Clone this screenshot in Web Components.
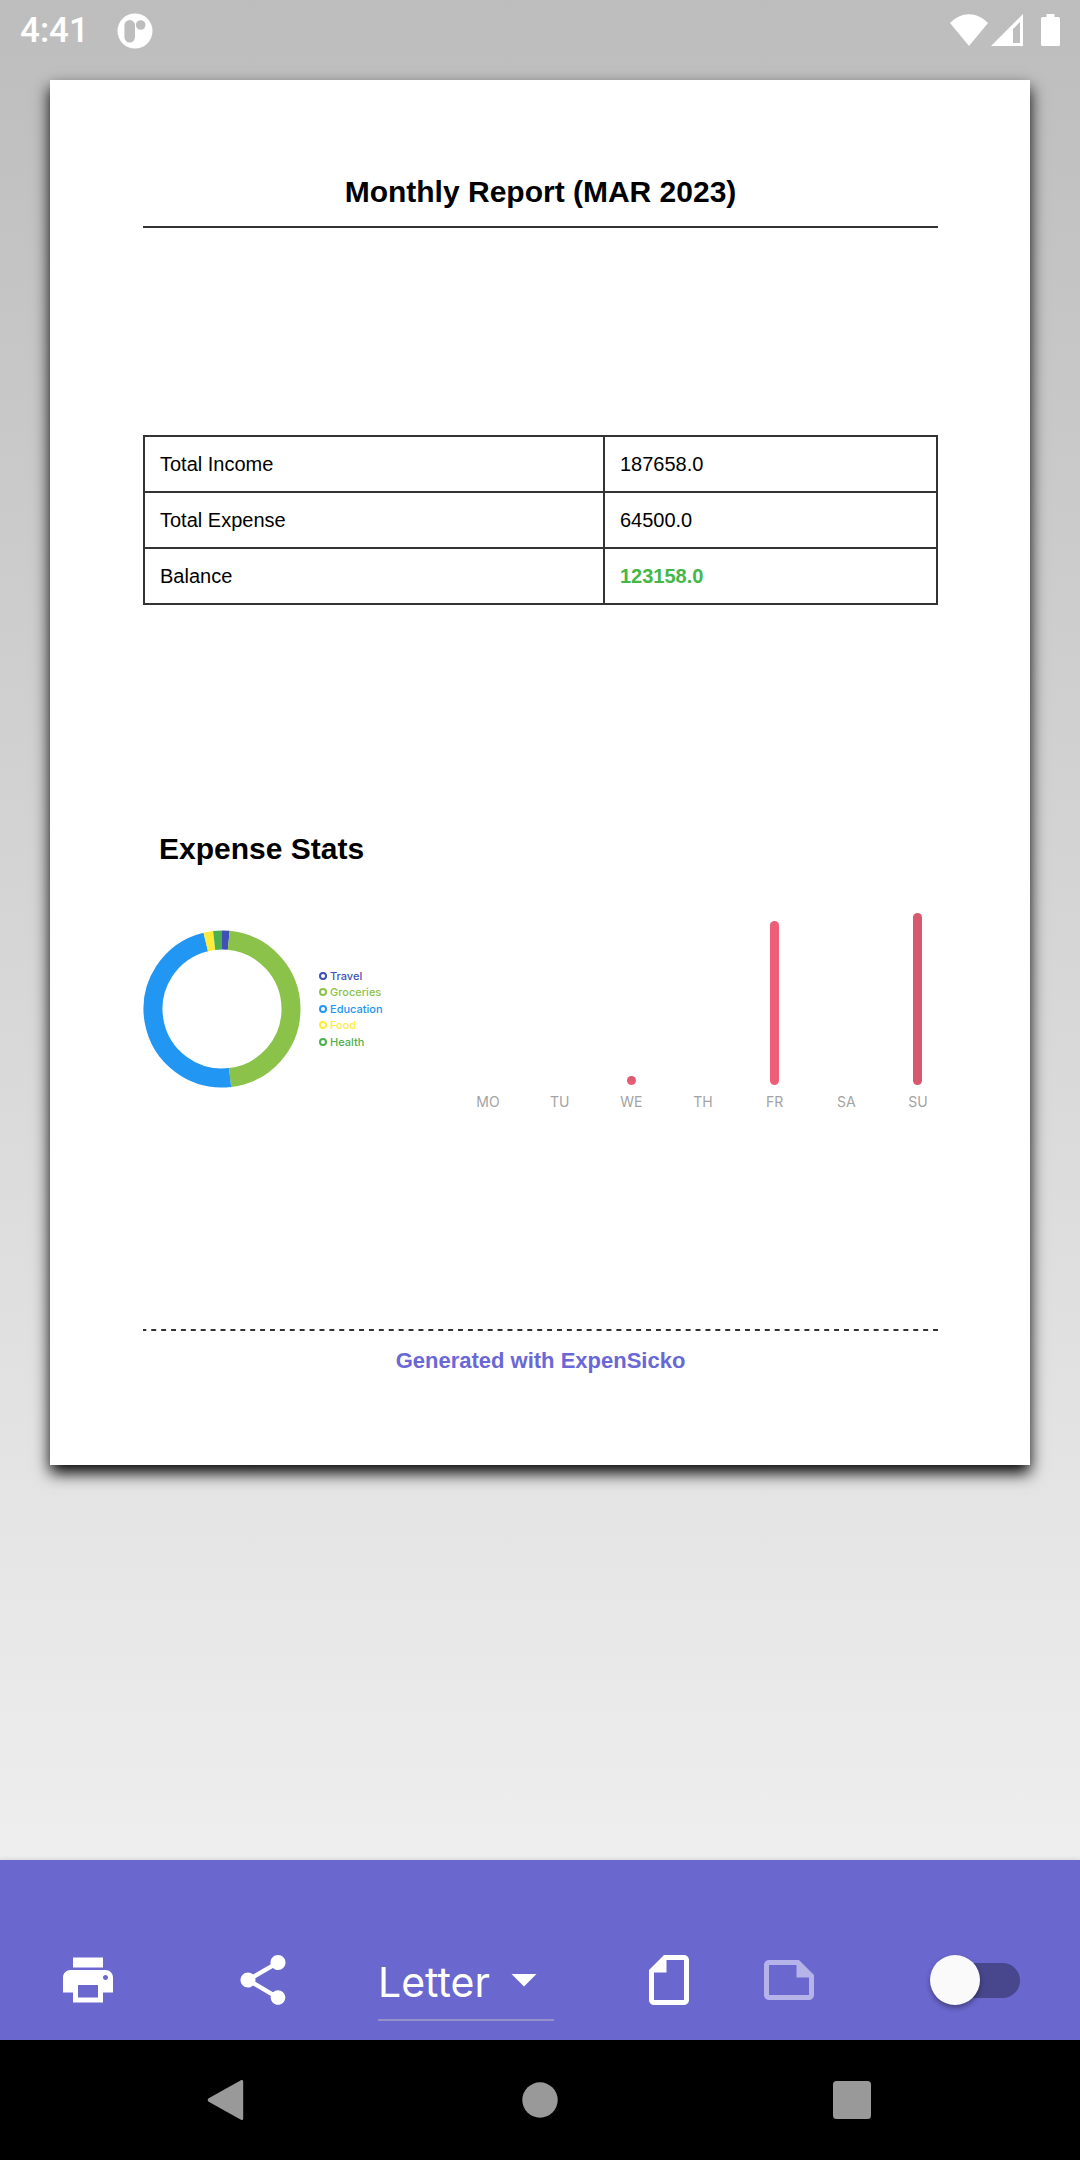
<!DOCTYPE html>
<html lang="en">
<head>
<meta charset="utf-8">
<meta name="viewport" content="width=device-width, initial-scale=1">
<title>Monthly Report</title>
<style>
  html, body { margin: 0; padding: 0; }
  body { min-height: 100vh; display: flex; flex-direction: column; }
  print-preview-app { flex: 1; }
</style>
</head>
<body>
<print-preview-app></print-preview-app>

<script>
const define = (name, html, setup) => {
  const template = document.createElement('template');
  template.innerHTML = '<style>*,*::before,*::after{box-sizing:border-box}</style>' + html;
  customElements.define(name, class extends HTMLElement {
    constructor() {
      super();
      this.attachShadow({ mode: 'open' }).appendChild(template.content.cloneNode(true));
    }
    connectedCallback() {
      if (setup) setup(this, this.shadowRoot);
    }
  });
};

define('status-bar', `
  <style>
    :host { display: flex; align-items: center; justify-content: space-between; height: 60px; padding: 2px 20px 0; color: #fff; font: 500 35px/58px Roboto, sans-serif; }
    div { display: flex; align-items: center; }
    .left { gap: 28px; }
    svg { display: block; fill: #fff; }
    .right { gap: 3px; }
    .battery { margin-left: 15px; }
  </style>
  <div class="left">
    <span>4:41</span>
    <svg width="36" height="36" viewBox="0 0 36 36" role="img" aria-label="App notification"><path fill-rule="evenodd" d="M18 .5a17.5 17.5 0 1 0 0 35a17.5 17.5 0 1 0 0-35zM12.700 7a5.300 5.300 0 0 1 5.300 5.300v12a5.300 5.300 0 0 1-10.600 0v-12A5.300 5.300 0 0 1 12.700 7zM23.700 7.200a4.800 4.800 0 1 1 0 9.600a4.800 4.800 0 1 1 0-9.600z"/></svg>
  </div>
  <div class="right">
    <svg width="38" height="34" viewBox="0 1 38 34" role="img" aria-label="Wi-Fi"><path d="M0 10C11-1.700 27-1.700 38 10L19 33z"/></svg>
    <svg width="32" height="34" viewBox="0 1 32 34" role="img" aria-label="Mobile signal"><path fill-rule="evenodd" d="M32 1v32H0zM29 9l-7 7v14h7z"/></svg>
    <svg class="battery" width="19" height="34" viewBox="0 1 19 34" role="img" aria-label="Battery full"><path d="M5.500 1h8v3H17.500a1.500 1.500 0 0 1 1.500 1.500V31.500a1.500 1.500 0 0 1-1.500 1.500h-16A1.500 1.500 0 0 1 0 31.500v-26A1.500 1.500 0 0 1 1.500 4h4z"/></svg>
  </div>
`);

define('report-sheet', `
  <style>
    :host { display: block; background: #fff; padding: 94px 92px 90px 93px; box-shadow: 0 8px 15px #000; color: #000; font-family: "Liberation Sans", Arial, sans-serif; }
  </style>
  <slot></slot>
`);

define('report-title', `
  <style>
    :host { display: block; border-bottom: 2px solid #333; }
    h1 { margin: 0; padding-bottom: 16px; text-align: center; font: bold 30px/36px "Liberation Sans", Arial, sans-serif; }
  </style>
  <h1><slot></slot></h1>
`);

define('report-totals', `
  <style>
    :host { display: block; margin-top: 207px; }
    table { width: 100%; border-collapse: collapse; table-layout: fixed; font-size: 20px; line-height: 24px; }
    th, td { height: 56px; padding: 0 15px; border: 2px solid #333; text-align: left; font-weight: normal; }
    th { width: 58%; }
    .balance { color: #44b749; font-weight: bold; }
  </style>
  <table>
    <tbody>
      <tr><th scope="row">Total Income</th><td>187658.0</td></tr>
      <tr><th scope="row">Total Expense</th><td>64500.0</td></tr>
      <tr><th scope="row">Balance</th><td class="balance">123158.0</td></tr>
    </tbody>
  </table>
`);

define('category-donut', `
  <style>
    :host { display: flex; align-items: center; gap: 18px; padding-bottom: 7px; }
    svg { display: block; }
    ul { list-style: none; margin: 0; padding: 0; height: 82px; display: flex; flex-direction: column; justify-content: space-between; font: 500 11px/16px Inter, sans-serif; }
    li { display: flex; align-items: center; gap: 3px; }
    li::before { content: ""; width: 8px; height: 8px; border: 2px solid; border-radius: 50%; }
  </style>
  <svg width="158" height="158" viewBox="-79 -79 158 158" role="img" aria-label="Expenses by category"></svg>
  <ul></ul>
`, (host, root) => {
  const slices = [
    ['Travel', '#3f51b5', 5.6], ['Groceries', '#8bc34a', 173.3],
    ['Education', '#2196f3', 346.4], ['Food', '#ffeb3b', 353.5], ['Health', '#4caf50', 360]
  ];
  const point = (deg, r) => {
    const a = deg * Math.PI / 180;
    return (Math.sin(a) * r).toFixed(3) + ' ' + (-Math.cos(a) * r).toFixed(3);
  };
  let from = 0;
  root.querySelector('svg').innerHTML = slices.map(([, color, to]) => {
    const d = `M${point(from, 69)}A69 69 0 0 1 ${point(to, 69)}`;
    from = to;
    return `<path d="${d}" fill="none" stroke="${color}" stroke-width="19"/>`;
  }).join('');
  root.querySelector('ul').innerHTML = slices.map(([name, color]) => `<li style="color:${color}">${name}</li>`).join('');
});

define('week-bars', `
  <style>
    :host { display: flex; justify-content: space-between; width: 470px; color: #a3a3a3; font: 400 14px/18px Inter, sans-serif; }
    div { width: 40px; display: flex; flex-direction: column; align-items: center; justify-content: flex-end; gap: 8px; height: 198px; }
    i { width: 9px; border-radius: 5px; background: #ee5e77; }
    .today { background: #d8586e; }
    .dot { background: linear-gradient(#d8586e, #ee5e77); }
  </style>
  <div>MO</div>
  <div>TU</div>
  <div><i class="dot" style="height:9px"></i>WE</div>
  <div>TH</div>
  <div><i style="height:164px"></i>FR</div>
  <div>SA</div>
  <div><i class="today" style="height:172px"></i>SU</div>
`);

define('expense-stats', `
  <style>
    :host { display: block; margin-top: 226px; }
    h2 { margin: 0 0 46px; padding: 0 16px; font: bold 30px/36px "Liberation Sans", Arial, sans-serif; }
    div { display: flex; justify-content: space-between; align-items: center; }
  </style>
  <h2>Expense Stats</h2>
  <div><category-donut></category-donut><week-bars></week-bars></div>
`);

define('report-footer', `
  <style>
    :host { display: block; margin-top: 218px; }
    svg { display: block; width: 100%; height: 2px; }
    p { margin: 16px 0 0; text-align: center; color: #6a67d6; font: bold 22px/28px "Liberation Sans", Arial, sans-serif; }
  </style>
  <svg viewBox="0 0 482 2" preserveAspectRatio="none" aria-hidden="true"><path d="M0 1H482" stroke="#333" stroke-width="2" stroke-dasharray="3 3" stroke-dashoffset="1"/></svg>
  <p><slot></slot></p>
`);

define('icon-button', `
  <style>
    :host { display: block; }
    button { display: grid; place-items: center; width: 120px; height: 120px; margin: 0; padding: 0; border: 0; background: none; color: inherit; }
    svg { width: 60px; height: 60px; fill: currentColor; }
  </style>
  <button type="button"><svg viewBox="0 0 24 24" aria-hidden="true"><path/></svg></button>
`, (host, root) => {
  const note = 'M16 4H4c-1.100 0-2 .9-2 2v12c0 1.100.9 2 2 2h16c1.100 0 2-.9 2-2v-8l-6-6zM4 18V6h11v5h5v7H4z';
  const paths = {
    print: 'M19 8H5c-1.660 0-3 1.340-3 3v6h4v4h12v-4h4v-6c0-1.660-1.340-3-3-3zm-3 11H8v-5h8v5zm3-7c-.55 0-1-.45-1-1s.45-1 1-1 1 .45 1 1-.45 1-1 1zm-1-9H6v4h12V3z',
    share: 'M18 16.080c-.76 0-1.440.3-1.960.77L8.910 12.700c.05-.23.09-.46.09-.7s-.04-.47-.09-.7l7.050-4.110c.54.5 1.250.81 2.040.81 1.660 0 3-1.340 3-3s-1.340-3-3-3-3 1.340-3 3c0 .24.04.47.09.7L8.040 9.810C7.500 9.310 6.790 9 6 9c-1.660 0-3 1.340-3 3s1.340 3 3 3c.79 0 1.500-.31 2.040-.81l7.120 4.160c-.05.21-.08.43-.08.65 0 1.610 1.310 2.920 2.920 2.920s2.920-1.310 2.920-2.920-1.310-2.920-2.920-2.920z',
    portrait: note,
    landscape: note
  };
  const icon = host.getAttribute('icon');
  const path = root.querySelector('path');
  path.setAttribute('d', paths[icon]);
  if (icon === 'portrait') path.setAttribute('transform', 'rotate(-90 12 12)');
  root.querySelector('button').setAttribute('aria-label', host.getAttribute('label'));
});

define('format-select', `
  <style>
    :host { display: grid; width: 176px; height: 82px; border-bottom: 2px solid #9690c9; }
    select, svg { grid-area: 1 / 1; }
    select { appearance: none; width: 100%; margin: 0; padding: 6px 0 0; border: 0; background: none; color: #fff; font: 400 41px/48px Inter, sans-serif; font-optical-sizing: none; }
    svg { width: 60px; height: 60px; justify-self: end; align-self: center; fill: #fff; pointer-events: none; }
  </style>
  <select aria-label="Page format"><option>Letter</option></select>
  <svg viewBox="0 0 24 24" aria-hidden="true"><path d="M7 10l5 5 5-5z"/></svg>
`);

define('debug-switch', `
  <style>
    :host { display: grid; align-items: center; width: 148px; height: 120px; padding-left: 26px; }
    input { appearance: none; display: grid; grid-template-columns: 50px 1fr; width: 90px; height: 50px; margin: 0; padding: 0; }
    input::before { content: ""; grid-area: 1 / 1 / 2 / 3; align-self: center; height: 35px; margin-left: 8px; border-radius: 18px; background: #48468c; }
    input::after { content: ""; grid-area: 1 / 1; width: 50px; height: 50px; border-radius: 50%; background: #fafafa; box-shadow: 0 3px 5px rgba(0,0,0,.35); }
  </style>
  <input type="checkbox" role="switch" aria-label="Debug">
`);

define('action-bar', `
  <style>
    :host { display: flex; align-items: center; justify-content: space-around; box-sizing: border-box; height: 180px; padding-top: 60px; background: #6a67ce; color: #fff; box-shadow: 0 0 5px rgba(0,0,0,.15); }
    debug-switch, format-select { box-sizing: border-box; }
    div { display: flex; }
    .off { color: rgba(255,255,255,.5); }
  </style>
  <icon-button icon="print" label="Print"></icon-button>
  <icon-button icon="share" label="Share"></icon-button>
  <format-select></format-select>
  <div>
    <icon-button icon="portrait" label="Portrait"></icon-button>
    <icon-button class="off" icon="landscape" label="Landscape"></icon-button>
  </div>
  <debug-switch></debug-switch>
`);

define('system-nav', `
  <style>
    :host { display: flex; justify-content: center; height: 120px; background: #000; }
    nav { display: flex; width: calc(100% * 13 / 15); justify-content: space-around; align-items: center; }
    button { display: grid; place-items: center; width: 100px; height: 100px; margin: 0; padding: 0; border: 0; background: none; }
    svg { width: 48px; height: 48px; fill: #999; }
  </style>
  <nav aria-label="System">
    <button type="button" aria-label="Back"><svg viewBox="0 0 48 48"><path d="M36.500 4.400c1.300-1 2.700-.4 2.700 1.200v36.800c0 1.600-1.400 2.200-2.700 1.200L4.700 25.800c-1.300-1-1.300-2.600 0-3.600z"/></svg></button>
    <button type="button" aria-label="Home"><svg viewBox="0 0 48 48"><circle cx="24" cy="24" r="17.700"/></svg></button>
    <button type="button" aria-label="Overview"><svg viewBox="0 0 48 48"><rect x="5" y="5" width="38" height="38" rx="3.500"/></svg></button>
  </nav>
`);

define('print-preview-app', `
  <style>
    :host { display: flex; flex-direction: column; }
    main { flex: 1; background: linear-gradient(#bdbdbd, #eee); }
    report-sheet { margin: 20px 50px; }
    status-bar { box-sizing: border-box; }
  </style>
  <main>
    <status-bar></status-bar>
    <report-sheet>
      <report-title>Monthly Report (MAR 2023)</report-title>
      <report-totals></report-totals>
      <expense-stats></expense-stats>
      <report-footer>Generated with ExpenSicko</report-footer>
    </report-sheet>
  </main>
  <action-bar></action-bar>
  <system-nav></system-nav>
`);
</script>
</body>
</html>
